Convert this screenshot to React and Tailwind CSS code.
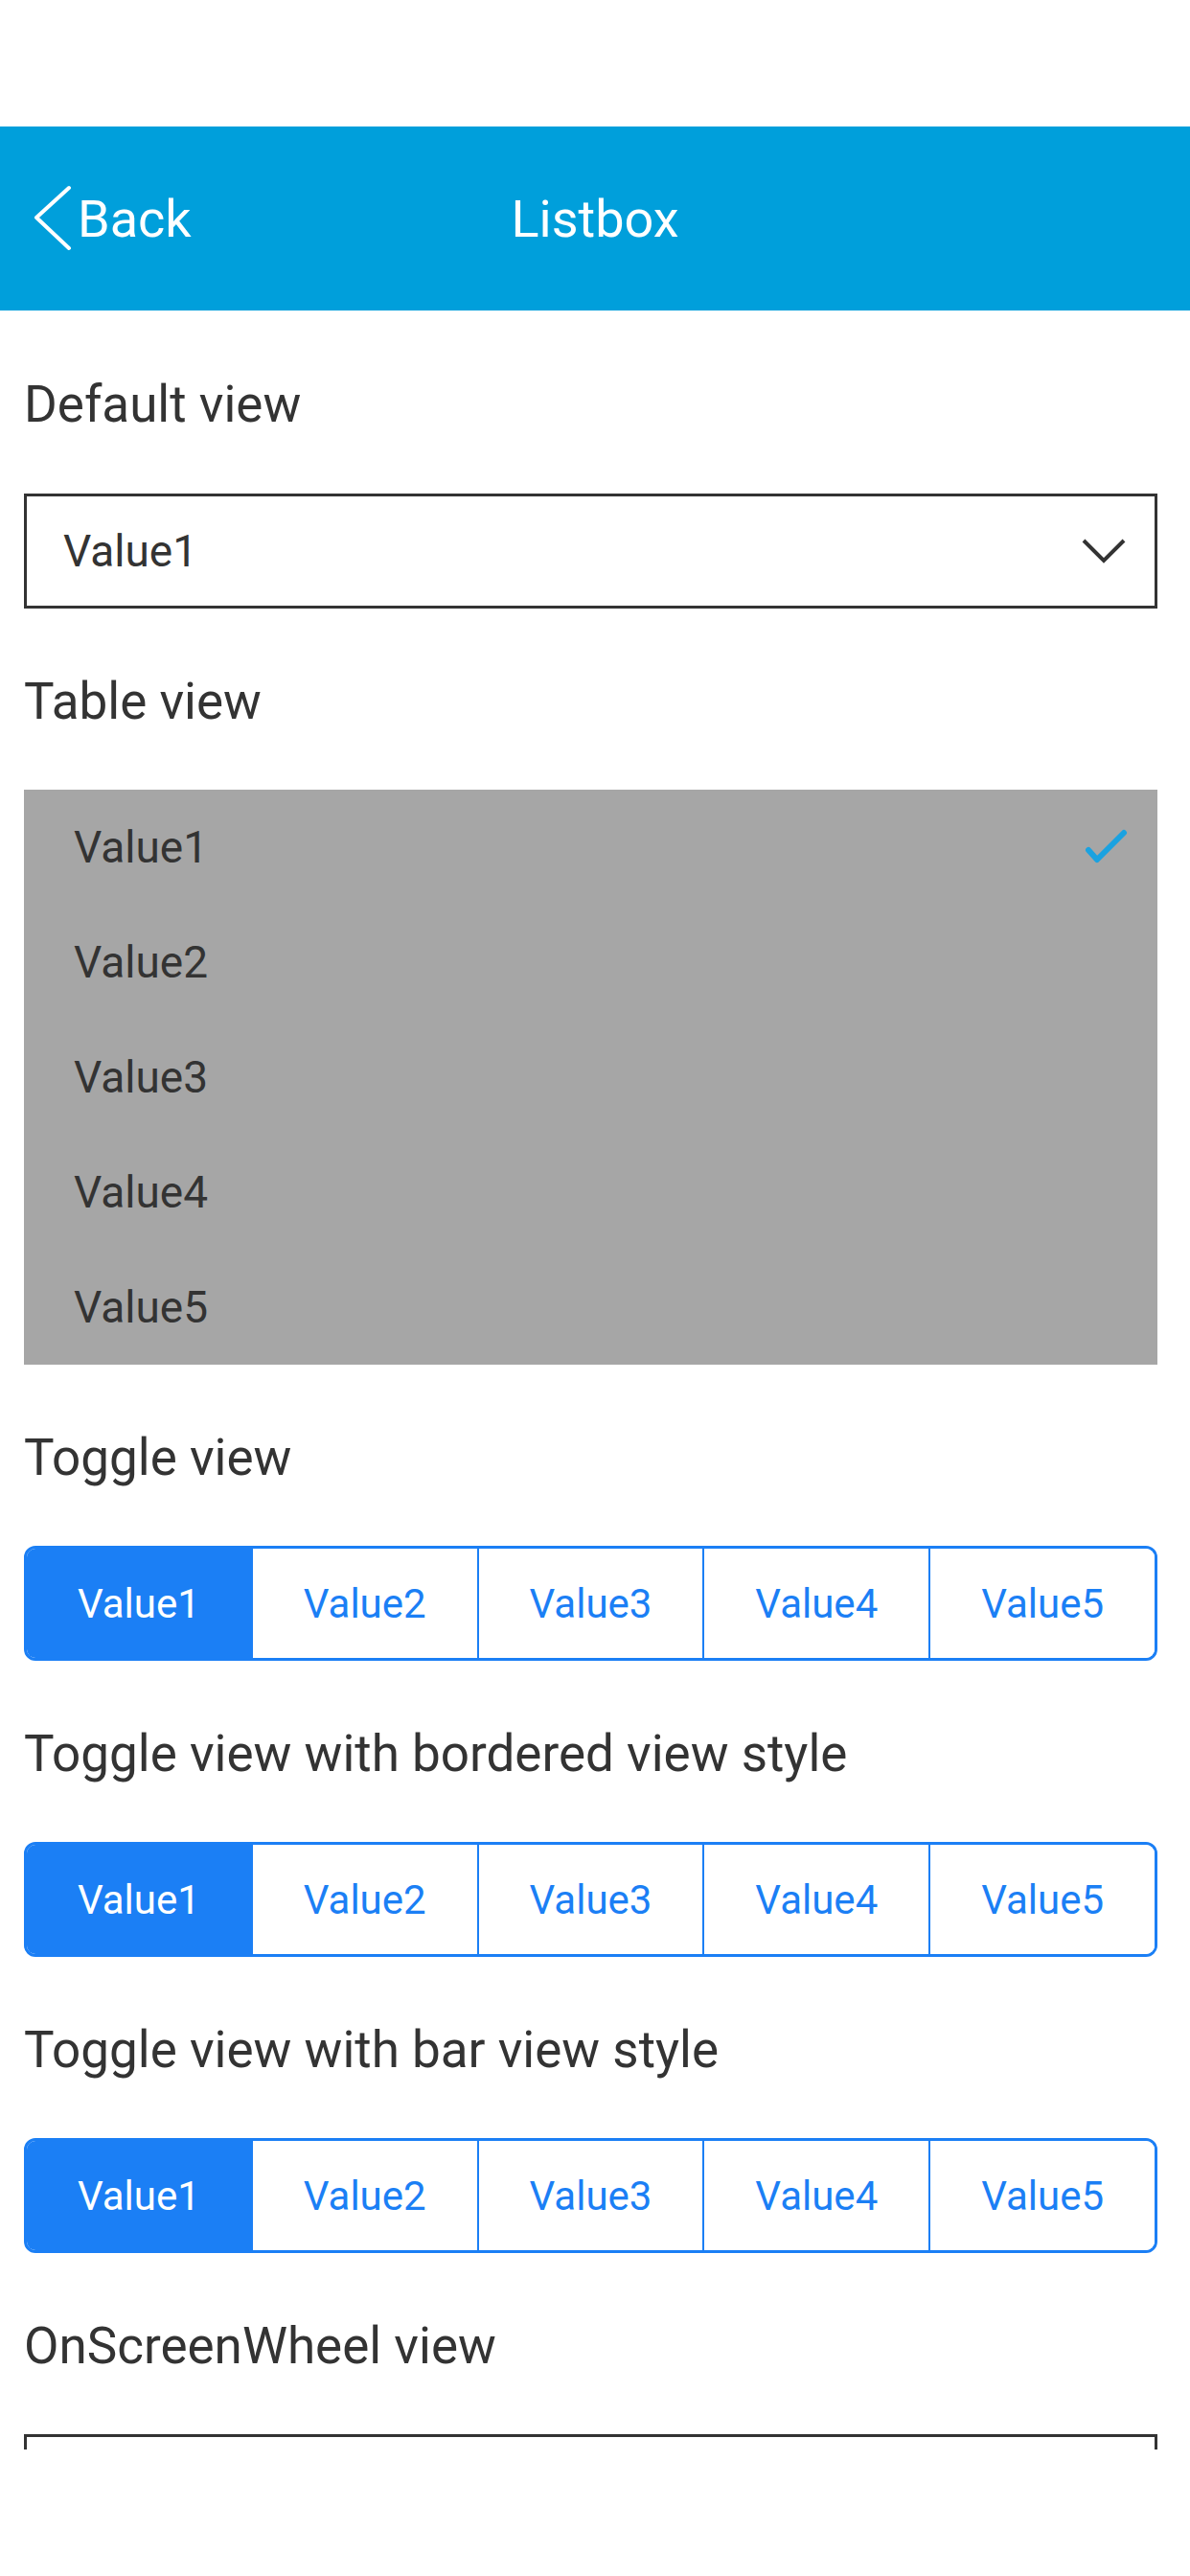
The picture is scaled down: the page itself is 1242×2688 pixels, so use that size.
import React from 'react'

const values = ['Value1', 'Value2', 'Value3', 'Value4', 'Value5']

const Label = ({ children, first }) => (
  <div className={(first ? 'h-[191px]' : 'h-[189px]') + ' flex items-center pt-[6px] text-[53px] text-[#333333]'}>
    {children}
  </div>
)

const Toggle = () => (
  <div className="flex h-[120px] overflow-hidden rounded-[12px] border-[3px] border-[#1b7ff5]">
    {values.map((v, i) => (
      <div
        key={v}
        className={
          i === 0
            ? 'flex flex-1 items-center justify-center bg-[#1b7ff5] text-[42px] text-white'
            : 'flex flex-1 items-center justify-center border-l-2 border-[#1b7ff5] bg-white text-[42px] text-[#1b7ff5]'
        }
      >
        {v}
      </div>
    ))}
  </div>
)

export default function App() {
  return (
    <div className="h-[2688px] w-[1242px] overflow-hidden bg-white font-['Roboto',sans-serif]">
      <div className="h-[132px]" />

      <header className="grid h-[192px] grid-cols-[1fr_auto_1fr] items-center bg-[#009fdb] text-white">
        <div className="flex items-center pl-[35px]">
          <svg width="40" height="70" viewBox="0 0 40 70" fill="none" stroke="white" strokeWidth="4" strokeLinecap="round" strokeLinejoin="round">
            <path d="M37 3 L3 34 L37 66" />
          </svg>
          <span className="ml-[6px] text-[54px]">Back</span>
        </div>
        <div className="text-[54px]">Listbox</div>
        <div />
      </header>

      <main className="pl-[25px] pr-[34px]">
        <Label first>Default view</Label>
        <div className="flex h-[120px] items-center justify-between border-[3px] border-[#333333] pl-[38px] pr-[30px] text-[46px] text-[#333333]">
          <span>Value1</span>
          <svg width="46" height="28" viewBox="0 0 46 28" fill="none" stroke="#333333" strokeWidth="4">
            <path d="M2 3 L23 24 L44 3" />
          </svg>
        </div>

        <Label>Table view</Label>
        <div className="bg-[#a6a6a6]">
          {values.map((v, i) => (
            <div key={v} className="flex h-[120px] items-center justify-between pl-[52px] pr-[31px] text-[46px] text-[#333333]">
              <span>{v}</span>
              {i === 0 ? (
                <svg width="46" height="38" viewBox="0 0 46 38" fill="none" stroke="#1ba2e0" strokeWidth="6" strokeLinecap="round" strokeLinejoin="round">
                  <path d="M5 22 L14 32 L42 4" />
                </svg>
              ) : null}
            </div>
          ))}
        </div>

        <Label>Toggle view</Label>
        <Toggle />

        <Label>Toggle view with bordered view style</Label>
        <Toggle />

        <Label>Toggle view with bar view style</Label>
        <Toggle />

        <Label>OnScreenWheel view</Label>
        <div className="h-[16px] border-x-[3px] border-t-[3px] border-[#333333]" />
      </main>
    </div>
  )
}
